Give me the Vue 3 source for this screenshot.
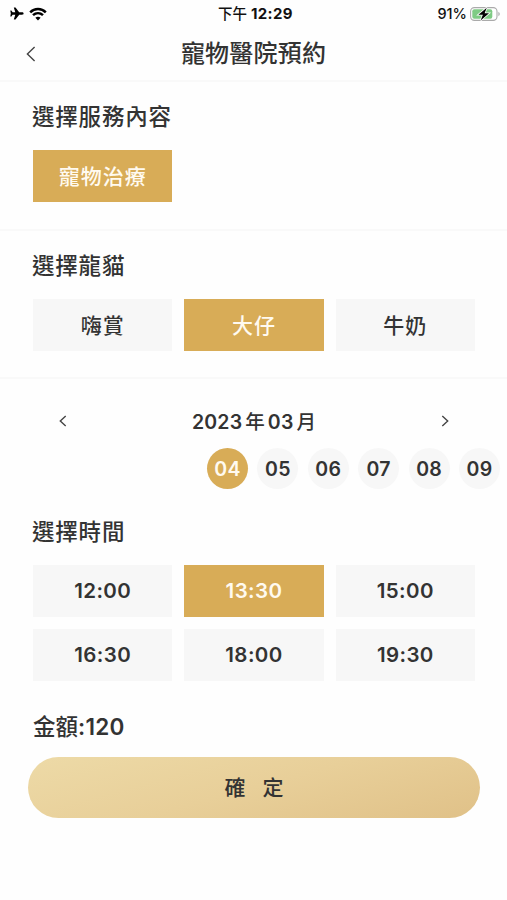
<script setup>
import { ref } from 'vue';

const services = ['寵物治療'];
const pets = ['嗨賞', '大仔', '牛奶'];
const days = ['04', '05', '06', '07', '08', '09'];
const times = ['12:00', '13:30', '15:00', '16:30', '18:00', '19:30'];

const service = ref('寵物治療');
const pet = ref('大仔');
const day = ref('04');
const time = ref('13:30');
const price = ref(120);
</script>

<template>
  <div class="page">
    <!-- status bar -->
    <div class="status">
      <div class="status-left">
        <svg class="plane" viewBox="0 0 14 13" width="14" height="13">
          <path d="M13.6 6.5c0-.8-.7-1.2-1.6-1.2H9.2L5.5.5H3.8l1.5 4.8H2.6L1.4 3.6H.3l.5 2.9-.5 2.9h1.1l1.2-1.7h2.7l-1.5 4.8h1.7l3.7-4.8H12c.9 0 1.6-.4 1.6-1.2z" />
        </svg>
        <svg class="wifi" viewBox="0 0 18 14" width="18" height="14">
          <path d="M1.2 5.3C5.6.9 12.4.9 16.8 5.3" />
          <path d="M4 8.2c2.9-2.7 7.1-2.7 10 0" />
          <path class="dot" d="M6.4 10.7c1.5-1.3 3.7-1.3 5.2 0L9 13.4z" />
        </svg>
      </div>
      <div class="clock">下午 <b>12:29</b></div>
      <div class="status-right">
        <span>91%</span>
        <svg viewBox="0 0 31 14" width="31" height="14">
          <rect x=".6" y=".6" width="26.4" height="12.8" rx="3.8" fill="#fff" stroke="#aaa" stroke-width="1.1" />
          <rect x="2.3" y="2.3" width="20" height="9.4" rx="2" fill="#7fcb84" />
          <path d="M28.4 4.8c1.8.8 1.8 3.6 0 4.4z" fill="#aaa" />
          <path d="M16.8.7 8.4 7.8h4.5L10.6 13.4l8.4-7.2h-4.4z" fill="#000" stroke="#fff" stroke-width="1.6" paint-order="stroke" />
        </svg>
      </div>
    </div>

    <!-- header -->
    <header class="header">
      <svg class="back" viewBox="0 0 10 16" width="10" height="16"><path d="M8.6 1 1.4 8l7.2 7" /></svg>
      <h1>寵物醫院預約</h1>
    </header>

    <section class="block">
      <h2>選擇服務內容</h2>
      <div class="options">
        <button v-for="s in services" :key="s" class="option" :class="{ active: service === s }" @click="service = s">{{ s }}</button>
      </div>
    </section>

    <section class="block pets">
      <h2>選擇龍貓</h2>
      <div class="options">
        <button v-for="p in pets" :key="p" class="option" :class="{ active: pet === p }" @click="pet = p">{{ p }}</button>
      </div>
    </section>

    <!-- calendar -->
    <div class="month">
      <svg viewBox="0 0 8 12" width="8" height="12"><path d="M6.7 1 1.3 6l5.4 5" /></svg>
      <span><b>2023</b><i>年</i><b>03</b><i>月</i></span>
      <svg viewBox="0 0 8 12" width="8" height="12"><path d="m1.3 1 5.4 5-5.4 5" /></svg>
    </div>
    <div class="days">
      <button v-for="d in days" :key="d" class="day" :class="{ active: day === d }" @click="day = d">{{ d }}</button>
    </div>

    <section class="block last">
      <h2>選擇時間</h2>
      <div class="options">
        <button v-for="t in times" :key="t" class="option time" :class="{ active: time === t }" @click="time = t">{{ t }}</button>
      </div>
    </section>

    <div class="price">金額<b>:{{ price }}</b></div>
    <button class="confirm"><span>確</span><span>定</span></button>
  </div>
</template>

<style>
body {
  background: #fefefe;
}
</style>

<style scoped>
.page {
  width: 507px;
  height: 900px;
  overflow: hidden;
  background: #fefefe;
  color: #333;
  font-family: Inter, "Noto Sans CJK TC", sans-serif;
  font-weight: 500;
}

button {
  border: none;
  padding: 0;
  font: inherit;
  color: inherit;
  cursor: pointer;
}

b {
  font-weight: 600;
}

.status {
  display: grid;
  grid-template-columns: 1fr auto 1fr;
  align-items: center;
  height: 27px;
  padding: 0 6px 0 10px;
  font-size: 14.5px;
  color: #111;
}

.status-left {
  display: flex;
  align-items: center;
  gap: 5px;
}

.wifi path {
  fill: none;
  stroke: #000;
  stroke-width: 2.5;
}

.wifi .dot {
  fill: #000;
  stroke: none;
}

.clock {
  line-height: 27px;
}

.clock b {
  font-weight: 700;
  font-size: 15px;
  letter-spacing: 0.4px;
}

.status-right {
  display: flex;
  justify-content: flex-end;
  align-items: center;
  gap: 3px;
}

.header {
  display: grid;
  grid-template-columns: 40px 1fr 40px;
  align-items: center;
  height: 53px;
  padding: 0 26px;
  border-bottom: 2px solid #f9f9f9;
}

.back path,
.month path {
  fill: none;
  stroke: #444;
  stroke-width: 1.4;
}

h1 {
  margin: 0;
  text-align: center;
  font-size: 24px;
  font-weight: 500;
  line-height: 51px;
  letter-spacing: 0.2px;
}

.block {
  height: 147px;
  padding: 0 32px 0 33px;
  border-bottom: 2px solid #f9f9f9;
}

.block.pets {
  height: 146px;
}

h2 {
  margin: 0;
  padding: 17px 0 15px;
  font-size: 22.5px;
  font-weight: 500;
  line-height: 36px;
  letter-spacing: 0.8px;
  text-indent: -1px;
}

.options {
  display: grid;
  grid-template-columns: repeat(3, 1fr);
  gap: 12px;
}

.option {
  height: 52px;
  padding-bottom: 2px;
  background: #f7f7f7;
  font-size: 21px;
  letter-spacing: 1px;
}

.option.time {
  padding-bottom: 0;
  font-size: 20.5px;
  font-weight: 600;
  letter-spacing: 0.4px;
}

.option.active,
.day.active {
  background: #d8ac57;
  color: #fffaf0;
}

.month {
  display: flex;
  justify-content: space-between;
  align-items: center;
  height: 30px;
  margin: 27px 58px 12px 59px;
  font-size: 19.5px;
}

.month span {
  position: relative;
  top: -1px;
}

.month b {
  letter-spacing: 0.2px;
}

.month i {
  margin: 0 3px;
  font-style: normal;
}

.month i:last-child {
  margin-right: 0;
}

.days {
  display: flex;
  justify-content: flex-end;
  gap: 9.4px;
  padding-right: 7px;
}

.day {
  width: 41px;
  height: 41px;
  border-radius: 50%;
  background: #f7f7f7;
  font-size: 19.5px;
  font-weight: 600;
  letter-spacing: 0.3px;
}

.block.last {
  height: auto;
  padding-top: 7.5px;
  border: none;
}

.price {
  margin: 28.5px 0 12px 33px;
  font-size: 22.5px;
  line-height: 36px;
}

.price b {
  letter-spacing: 0.3px;
}

.confirm {
  display: flex;
  justify-content: center;
  align-items: center;
  gap: 17px;
  width: 452px;
  height: 61px;
  margin-left: 28px;
  padding-bottom: 3px;
  border-radius: 31px;
  background: linear-gradient(165deg, #eddaa7 0%, #e8cf99 50%, #e0c188 100%);
  font-size: 21px;
}
</style>
